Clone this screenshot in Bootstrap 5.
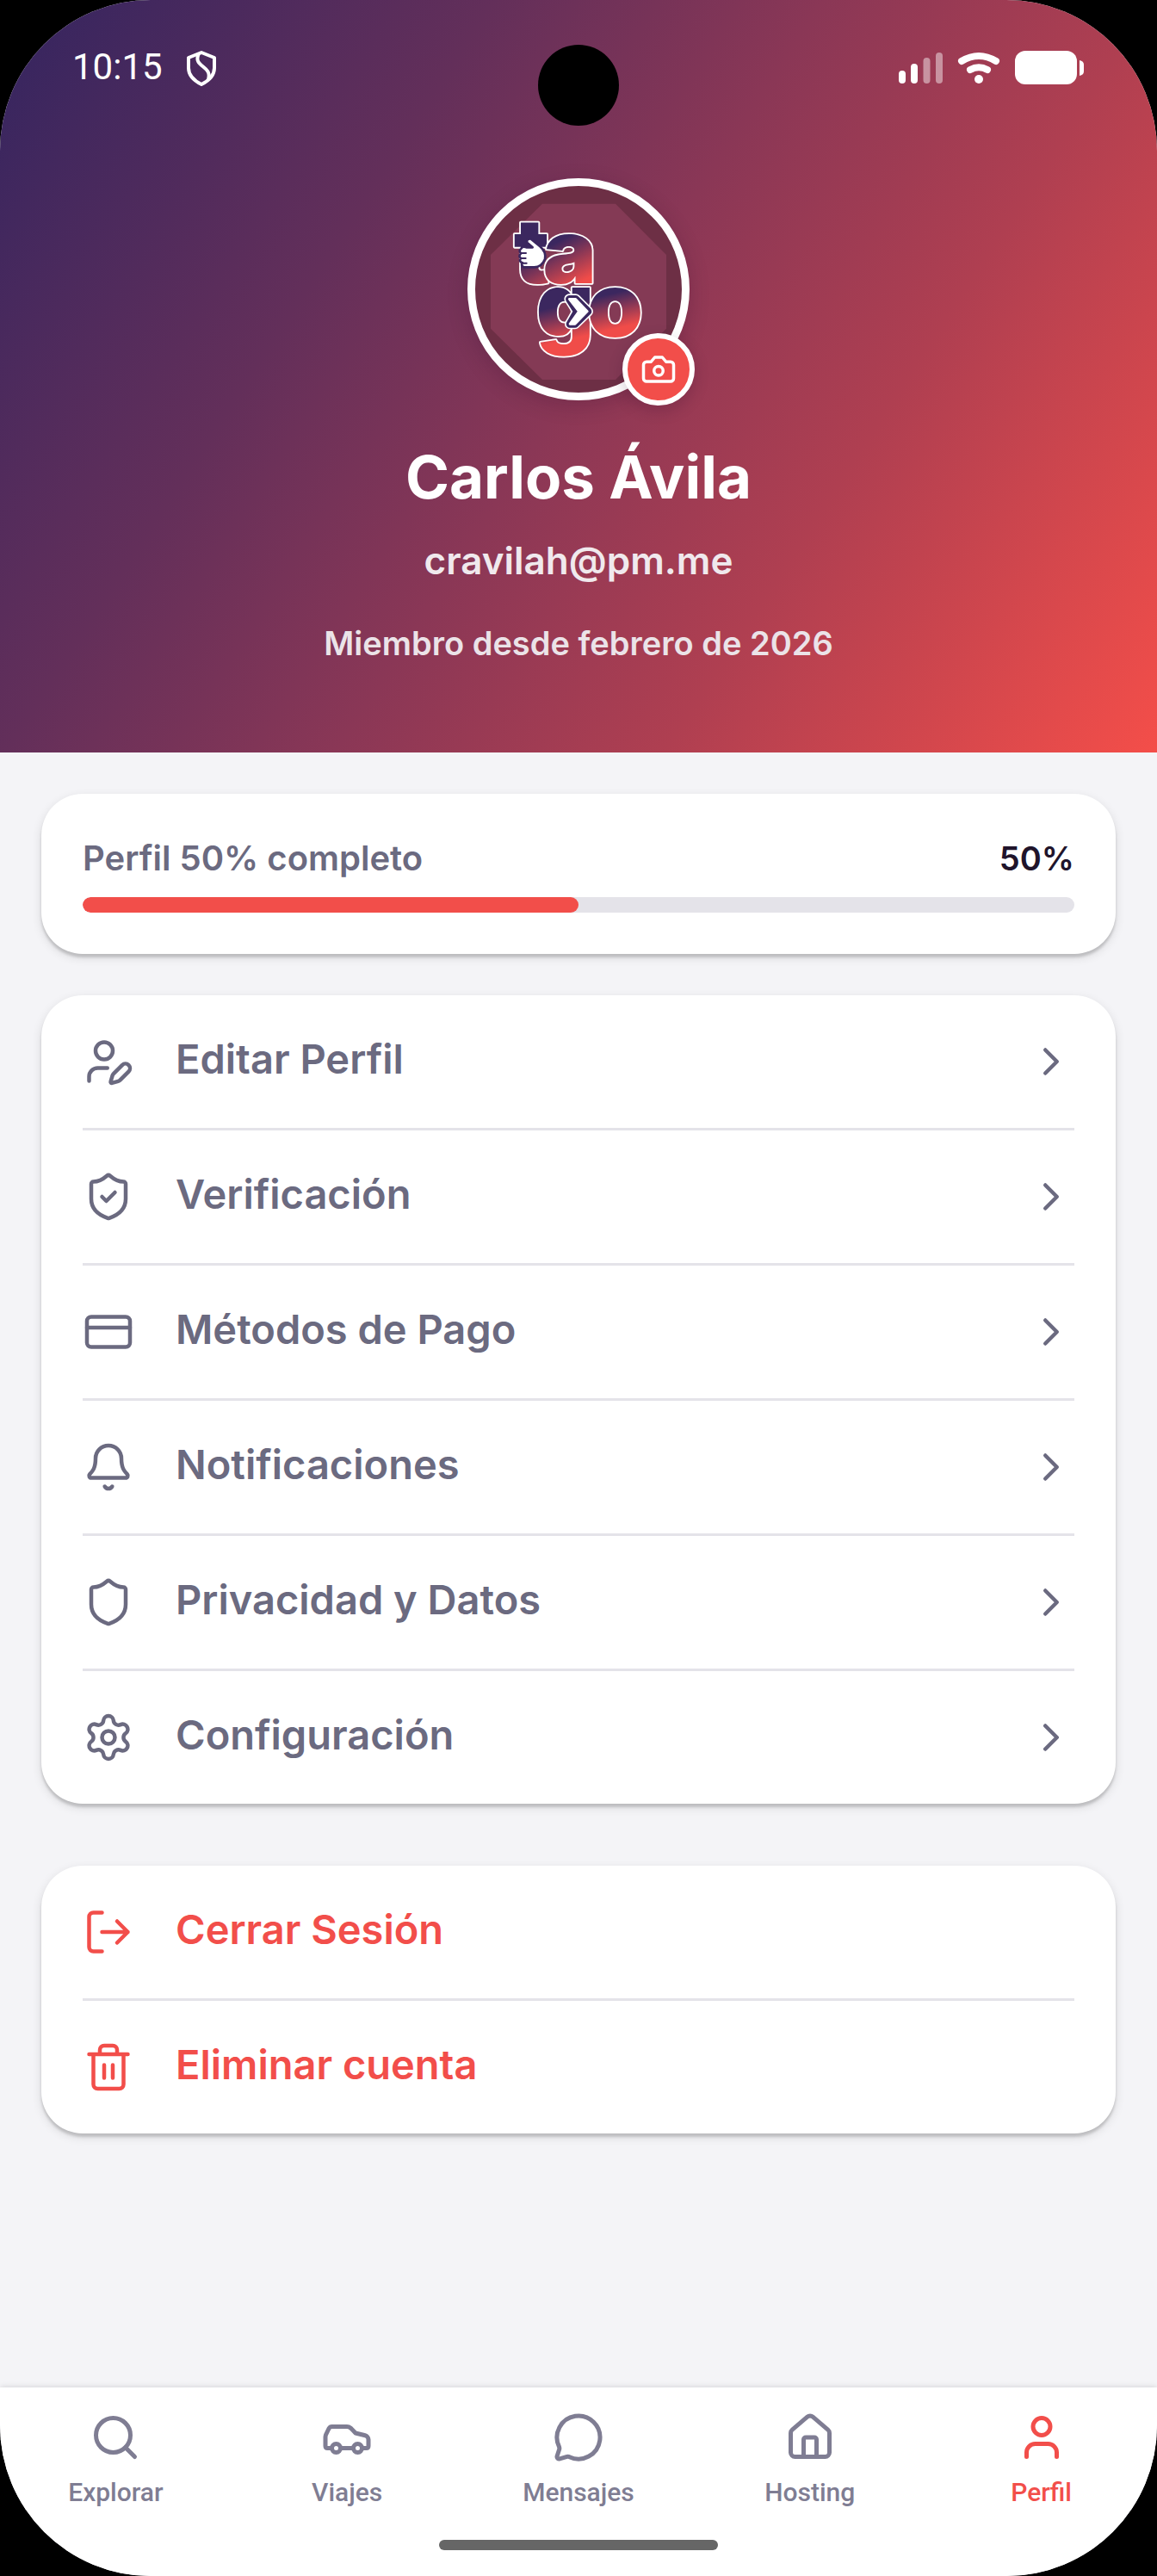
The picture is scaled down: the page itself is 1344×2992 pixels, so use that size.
<!DOCTYPE html>
<html lang="es">
<head>
<meta charset="utf-8">
<meta name="viewport" content="width=device-width, initial-scale=1">
<title>Perfil</title>
<link rel="stylesheet" href="https://cdn.jsdelivr.net/npm/bootstrap@5.3.0/dist/css/bootstrap.min.css">
<style>
  :root { --ink: #6b6a80; --accent: #f24e4a; --line: #e4e3e9; --night: #3a265f; }
  body { background: #000; font-family: Inter, "Open Sans", sans-serif; }
  .screen { min-height: 100vh; background: #f4f4f7; border-radius: 175px; overflow: hidden; }
  .ico { width: 60px; height: 60px; fill: none; stroke: currentColor; stroke-width: 1.8; stroke-linecap: round; stroke-linejoin: round; flex: none; }

  .hero { background: linear-gradient(123deg, #3a265f 4%, #632f5a 30%, #8a3756 50%, #af3f51 70%, #f44e49); padding-bottom: 103px; }
  .punch-hole { width: 94px; height: 94px; top: 52px; background: #000; }
  .status-bar { padding: 48px 84px 0; height: 110px; }
  .status-bar svg { display: block; }
  .clock { font: 400 42px/60px Roboto, sans-serif; }
  .avatar { width: 258px; height: 258px; margin-top: 97px; border: 9px solid #fff; background: #6d2f45; box-shadow: 0 6px 24px rgba(40, 10, 40, .2); }
  .avatar-art { width: 240px; height: 240px; }
  .camera-btn { width: 84px; height: 84px; right: -15px; bottom: -15px; border: 6px solid #fff; background: var(--accent); color: #fff; box-shadow: 0 6px 18px rgba(40, 10, 40, .2); }
  .camera-btn .ico { width: 42px; height: 42px; stroke-width: 2; }
  .who { font-size: 69px; line-height: 80px; font-weight: 700; margin: 49px 0 30px; }
  .mail { font-size: 44px; line-height: 54px; font-weight: 600; margin-bottom: 45px; color: #f0e9ed; }
  .since { font-size: 38px; line-height: 48px; font-weight: 600; color: #ebe3e8; }

  .content { padding: 48px; }
  .panel { background: #fff; border-radius: 48px; padding: 0 48px; box-shadow: 0 4px 3px rgba(0, 0, 0, .15), 0 4px 12px rgba(0, 0, 0, .12); }
  .panel-progress { padding: 48px; }
  .panel-head { font-size: 40px; line-height: 54px; font-weight: 600; color: var(--ink); margin-bottom: 18px; }
  .panel-head strong { font-size: 38px; color: #20142b; font-weight: 600; }
  .panel .progress { height: 18px; border-radius: 9px; background: var(--line); }
  .panel .progress-bar { background: var(--accent); border-radius: 9px; }
  .menu .list-group-item { padding: 47px 0; gap: 48px; border: 0 solid var(--line); border-bottom-width: 3px; background: none; color: var(--ink); }
  .menu .list-group-item:last-child { border-bottom-width: 0; }
  .menu.danger .list-group-item { color: var(--accent); }
  .menu-text { font-size: 47px; line-height: 54px; font-weight: 600; padding-bottom: 6px; }
  .menu .chevron { width: 54px; height: 54px; stroke-width: 2; }
  .gap-48 { gap: 48px; }
  .mt-24 { margin-top: 24px; }

  .tabbar { background: #fff; padding: 28px 0 30px; box-shadow: 0 -1px 6px rgba(0, 0, 0, .12); }
  .tabbar .nav-link { flex: 1 1 0; padding: 0; gap: 16px; color: #7f7d93; font: 500 30px/36px Roboto, sans-serif; }
  .tabbar .nav-link.active { color: var(--accent); }
  .tabbar .ico { stroke-width: 2; }
  .home-bar { width: 324px; height: 12px; margin-top: 37px; background: #666; }
</style>
<script src="https://cdn.jsdelivr.net/npm/bootstrap@5.3.0/dist/js/bootstrap.bundle.min.js"></script>
</head>
<body>
<div class="screen d-flex flex-column">

  <header class="hero position-relative text-white text-center d-flex flex-column align-items-center">
    <div class="punch-hole position-absolute start-50 translate-middle-x rounded-circle"></div>
    <div class="status-bar w-100 d-flex justify-content-between align-items-start">
      <div class="d-flex align-items-center gap-4">
        <span class="clock">10:15</span>
        <svg width="42" height="60" viewBox="0 0 42 60" fill="none" stroke="#fff" stroke-width="4" stroke-linejoin="round" aria-label="VPN"><path d="M21 13 36 19V31C36 39 30 45.500 21 50 12 45.500 6 39 6 31V19Z"/><path d="M18 14C10 30 34 28 29 44"/></svg>
      </div>
      <div class="d-flex align-items-center">
        <svg width="217" height="60" viewBox="1044 48 217 60" fill="#fff" aria-label="Señal, wifi y batería">
          <rect x="1045" y="82" width="8" height="15" rx="4"/><rect x="1059" y="74" width="8" height="23" rx="4"/>
          <g opacity=".45"><rect x="1073.500" y="67" width="8" height="30" rx="4"/><rect x="1088" y="61" width="8" height="36" rx="4"/></g>
          <g fill="none" stroke="#fff" stroke-width="8" stroke-linecap="round"><path d="M1118 71Q1138 59 1158 71"/><path d="M1128 81Q1138 75.500 1148 81"/></g>
          <circle cx="1138" cy="92" r="5"/>
          <rect x="1180" y="59" width="72" height="39" rx="12"/><path d="M1255 70q5 1 5 5v8q0 4-5 5z"/>
        </svg>
      </div>
    </div>

    <div class="avatar rounded-circle position-relative">
      <svg class="avatar-art d-block" viewBox="96 78 720 720" role="img" aria-label="tago">
        <defs>
          <linearGradient id="ga" gradientUnits="userSpaceOnUse" x1="330" y1="240" x2="430" y2="430"><stop offset=".25" stop-color="#3b275f"/><stop offset="1" stop-color="#f04c49"/></linearGradient>
          <linearGradient id="gb" gradientUnits="userSpaceOnUse" x1="470" y1="450" x2="510" y2="620"><stop offset=".15" stop-color="#3b275f"/><stop offset=".85" stop-color="#f04c49"/></linearGradient>
        </defs>
        <path fill="#843a55" d="M330 140H585L762 318V575L585 753H330L150 575V318Z"/>
        <g font-family="Inter, sans-serif" font-weight="900" font-size="312" stroke="#fff" stroke-width="11" stroke-linejoin="round" paint-order="stroke">
          <text fill="url(#ga)" y="416"><tspan x="230">t</tspan><tspan x="332">a</tspan></text>
          <text fill="url(#gb)" y="602"><tspan x="308">g</tspan><tspan x="486">o</tspan></text>
        </g>
        <path fill="#fff" stroke="#3b275f" stroke-width="8" stroke-linejoin="round" d="M296 292 277 275Q274 261 289 262L322 289Q344 308 339 333 327 362 300 361H266Q254 356 261 346 247 341 255 330 245 322 256 313 246 304 256 296 262 287 274 292Z"/>
        <path fill="none" stroke="#3b275f" stroke-width="6" stroke-linecap="round" d="M258 312H273M256 330H272M261 347H275"/>
        <path fill="none" stroke="#fff" stroke-width="36" stroke-linejoin="round" d="M424 472H446L489 515 444 559H426L451 515Z"/>
        <path fill="#fff" stroke="#3b275f" stroke-width="26" stroke-linejoin="round" d="M424 472H446L489 515 444 559H426L451 515Z"/>
        <path fill="#fff" stroke="#fff" stroke-width="8" stroke-linejoin="round" d="M424 472H446L487 515 444 559H426L457 515Z"/>
      </svg>
      <button type="button" class="camera-btn position-absolute rounded-circle p-0 d-flex align-items-center justify-content-center" aria-label="Cambiar foto">
        <svg class="ico" viewBox="0 0 24 24"><path d="M14.500 4h-5L7 7H4a2 2 0 0 0-2 2v9a2 2 0 0 0 2 2h16a2 2 0 0 0 2-2V9a2 2 0 0 0-2-2h-3z"/><circle cx="12" cy="13" r="3"/></svg>
      </button>
    </div>

    <h1 class="who">Carlos Ávila</h1>
    <p class="mail">cravilah@pm.me</p>
    <p class="since mb-0">Miembro desde febrero de 2026</p>
  </header>

  <main class="content d-flex flex-column gap-48 flex-grow-1">
    <section class="panel panel-progress">
      <div class="panel-head d-flex justify-content-between"><span>Perfil 50% completo</span><strong>50%</strong></div>
      <div class="progress" role="progressbar" aria-label="Perfil completo" aria-valuenow="50" aria-valuemin="0" aria-valuemax="100"><div class="progress-bar" style="width:50%"></div></div>
    </section>

    <nav class="panel menu list-group" aria-label="Cuenta">
      <a href="#" class="list-group-item d-flex align-items-center">
        <svg class="ico" viewBox="0 0 24 24"><path d="M11.500 15H7a4 4 0 0 0-4 4v2"/><path d="M21.378 16.626a1 1 0 0 0-3.004-3.004l-4.010 4.012a2 2 0 0 0-.506.854l-.837 2.870a.5.5 0 0 0 .620.620l2.870-.837a2 2 0 0 0 .854-.506z"/><circle cx="10" cy="7" r="4"/></svg>
        <span class="menu-text flex-grow-1">Editar Perfil</span>
        <svg class="ico chevron" viewBox="0 0 24 24"><path d="m9 18 6-6-6-6"/></svg></a>
      <a href="#" class="list-group-item d-flex align-items-center">
        <svg class="ico" viewBox="0 0 24 24"><path d="M20 13c0 5-3.500 7.500-7.660 8.950a1 1 0 0 1-.670-.010C7.500 20.500 4 18 4 13V6a1 1 0 0 1 1-1c2 0 4.500-1.200 6.240-2.720a1.170 1.170 0 0 1 1.520 0C14.510 3.810 17 5 19 5a1 1 0 0 1 1 1z"/><path d="m9 12 2 2 4-4"/></svg>
        <span class="menu-text flex-grow-1">Verificación</span>
        <svg class="ico chevron" viewBox="0 0 24 24"><path d="m9 18 6-6-6-6"/></svg></a>
      <a href="#" class="list-group-item d-flex align-items-center">
        <svg class="ico" viewBox="0 0 24 24"><rect x="2" y="5" width="20" height="14" rx="2"/><path d="M2 10h20"/></svg>
        <span class="menu-text flex-grow-1">Métodos de Pago</span>
        <svg class="ico chevron" viewBox="0 0 24 24"><path d="m9 18 6-6-6-6"/></svg></a>
      <a href="#" class="list-group-item d-flex align-items-center">
        <svg class="ico" viewBox="0 0 24 24"><path d="M10.268 21a2 2 0 0 0 3.464 0"/><path d="M3.262 15.326A1 1 0 0 0 4 17h16a1 1 0 0 0 .740-1.673C19.410 13.956 18 12.499 18 8A6 6 0 0 0 6 8c0 4.499-1.411 5.956-2.738 7.326"/></svg>
        <span class="menu-text flex-grow-1">Notificaciones</span>
        <svg class="ico chevron" viewBox="0 0 24 24"><path d="m9 18 6-6-6-6"/></svg></a>
      <a href="#" class="list-group-item d-flex align-items-center">
        <svg class="ico" viewBox="0 0 24 24"><path d="M20 13c0 5-3.500 7.500-7.660 8.950a1 1 0 0 1-.670-.010C7.500 20.500 4 18 4 13V6a1 1 0 0 1 1-1c2 0 4.500-1.200 6.240-2.720a1.170 1.170 0 0 1 1.520 0C14.510 3.810 17 5 19 5a1 1 0 0 1 1 1z"/></svg>
        <span class="menu-text flex-grow-1">Privacidad y Datos</span>
        <svg class="ico chevron" viewBox="0 0 24 24"><path d="m9 18 6-6-6-6"/></svg></a>
      <a href="#" class="list-group-item d-flex align-items-center">
        <svg class="ico" viewBox="0 0 24 24"><path d="M9.671 4.136a2.340 2.340 0 0 1 4.659 0 2.340 2.340 0 0 0 3.319 1.915 2.340 2.340 0 0 1 2.330 4.033 2.340 2.340 0 0 0 0 3.831 2.340 2.340 0 0 1-2.330 4.033 2.340 2.340 0 0 0-3.319 1.915 2.340 2.340 0 0 1-4.659 0 2.340 2.340 0 0 0-3.320-1.915 2.340 2.340 0 0 1-2.330-4.033 2.340 2.340 0 0 0 0-3.831A2.340 2.340 0 0 1 6.350 6.051a2.340 2.340 0 0 0 3.319-1.915"/><circle cx="12" cy="12" r="3"/></svg>
        <span class="menu-text flex-grow-1">Configuración</span>
        <svg class="ico chevron" viewBox="0 0 24 24"><path d="m9 18 6-6-6-6"/></svg></a>
    </nav>

    <div class="panel menu danger list-group mt-24">
      <button type="button" class="list-group-item text-start d-flex align-items-center">
        <svg class="ico" viewBox="0 0 24 24"><path d="m16 17 5-5-5-5M21 12H9M9 21H5a2 2 0 0 1-2-2V5a2 2 0 0 1 2-2h4"/></svg>
        <span class="menu-text">Cerrar Sesión</span></button>
      <button type="button" class="list-group-item text-start d-flex align-items-center">
        <svg class="ico" viewBox="0 0 24 24"><path d="M10 11v6M14 11v6M19 6v14a2 2 0 0 1-2 2H7a2 2 0 0 1-2-2V6M3 6h18M8 6V4a2 2 0 0 1 2-2h4a2 2 0 0 1 2 2v2"/></svg>
        <span class="menu-text">Eliminar cuenta</span></button>
    </div>
  </main>

  <footer class="tabbar d-flex flex-column align-items-center">
    <nav class="d-flex w-100" aria-label="Principal">
      <a href="#" class="nav-link d-flex flex-column align-items-center"><svg class="ico" viewBox="0 0 24 24"><circle cx="11" cy="11" r="8"/><path d="m21 21-4.300-4.300"/></svg>Explorar</a>
      <a href="#" class="nav-link d-flex flex-column align-items-center"><svg class="ico" viewBox="0 0 24 24"><path d="M19 17h2c.6 0 1-.4 1-1v-3c0-.9-.7-1.700-1.500-1.900C18.700 10.600 16 10 16 10s-1.300-1.400-2.200-2.300c-.5-.4-1.100-.7-1.800-.7H5c-.6 0-1.100.4-1.400.9l-1.400 2.900A3.700 3.700 0 0 0 2 12v4c0 .6.4 1 1 1h2"/><circle cx="7" cy="17" r="2"/><path d="M9 17h6"/><circle cx="17" cy="17" r="2"/></svg>Viajes</a>
      <a href="#" class="nav-link d-flex flex-column align-items-center"><svg class="ico" viewBox="0 0 24 24"><path d="M2.992 16.342a2 2 0 0 1 .094 1.167l-1.065 3.290a1 1 0 0 0 1.236 1.168l3.413-.998a2 2 0 0 1 1.099.092 10 10 0 1 0-4.777-4.719"/></svg>Mensajes</a>
      <a href="#" class="nav-link d-flex flex-column align-items-center"><svg class="ico" viewBox="0 0 24 24"><path d="M15 21v-8a1 1 0 0 0-1-1h-4a1 1 0 0 0-1 1v8"/><path d="M3 10a2 2 0 0 1 .709-1.528l7-6a2 2 0 0 1 2.582 0l7 6A2 2 0 0 1 21 10v9a2 2 0 0 1-2 2H5a2 2 0 0 1-2-2z"/></svg>Hosting</a>
      <a href="#" class="nav-link active d-flex flex-column align-items-center" aria-current="page"><svg class="ico" viewBox="0 0 24 24"><path d="M19 21v-2a4 4 0 0 0-4-4H9a4 4 0 0 0-4 4v2"/><circle cx="12" cy="7" r="4"/></svg>Perfil</a>
    </nav>
    <div class="home-bar rounded-pill"></div>
  </footer>
</div>
</body>
</html>
